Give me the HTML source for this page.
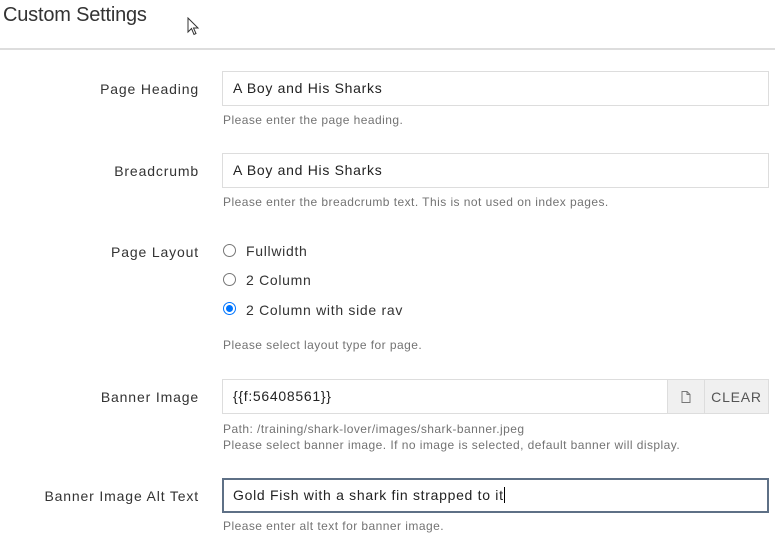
<!DOCTYPE html>
<html><head><meta charset="utf-8"><style>
*{box-sizing:border-box;margin:0;padding:0}
body{width:775px;height:535px;overflow:hidden;background:#fff;font-family:"Liberation Sans",Arial,sans-serif;color:#333;position:relative}
.abs{position:absolute}
h1{position:absolute;left:3px;top:4px;font-size:20px;font-weight:normal;color:#333;letter-spacing:-0.2px}
.hr{position:absolute;left:0;top:48px;width:775px;height:2px;background:#ddd}
.lbl{position:absolute;right:576px;font-size:14px;color:#333;text-align:right;white-space:nowrap;letter-spacing:0.85px}
.inp{position:absolute;left:222px;width:547px;height:35px;border:1px solid #ddd;font-size:14px;padding:8px 10px;color:#222;white-space:nowrap;letter-spacing:0.7px}
.help{position:absolute;left:223px;font-size:12px;color:#737373;white-space:nowrap;letter-spacing:0.45px}
.radio{position:absolute;left:223px;width:13px;height:13px;border:1px solid #777;border-radius:50%}
.radio.on{border:1px solid #0075ff;}
.radio.on::after{content:"";position:absolute;left:2px;top:2px;width:7px;height:7px;border-radius:50%;background:#0075ff}
.rl{position:absolute;left:246px;font-size:14px;color:#333;letter-spacing:0.7px}
</style></head><body>
<h1>Custom Settings</h1>
<svg class="abs" style="left:187px;top:17px" width="14" height="20" viewBox="0 0 14 20"><path d="M1 1 L1 15 L4.5 11.5 L7 17.5 L9 16.5 L6.5 11 L11 11 Z" fill="#fff" stroke="#333" stroke-width="1"/></svg>
<div class="hr"></div>

<div class="lbl" style="top:81px">Page Heading</div>
<div class="inp" style="top:71px">A Boy and His Sharks</div>
<div class="help" style="top:113px">Please enter the page heading.</div>

<div class="lbl" style="top:163px">Breadcrumb</div>
<div class="inp" style="top:153px">A Boy and His Sharks</div>
<div class="help" style="top:195px">Please enter the breadcrumb text. This is not used on index pages.</div>

<div class="lbl" style="top:244px">Page Layout</div>
<div class="radio" style="top:244px"></div><div class="rl" style="top:243px">Fullwidth</div>
<div class="radio" style="top:273px"></div><div class="rl" style="top:272px">2 Column</div>
<div class="radio on" style="top:302px"></div><div class="rl" style="top:302px">2 Column with side rav</div>
<div class="help" style="top:338px">Please select layout type for page.</div>

<div class="lbl" style="top:389px">Banner Image</div>
<div class="inp" style="top:379px;width:446px">{{f:56408561}}</div>
<div class="abs" style="left:667px;top:379px;width:38px;height:35px;background:#f0f0f0;border:1px solid #ddd"></div>
<svg class="abs" style="left:681px;top:391px" width="10" height="12" viewBox="0 0 10 12"><path d="M1 .5H6L9 3.5V11.5H1Z M6 .5V3.5H9" fill="none" stroke="#777" stroke-width="1"/></svg>
<div class="abs" style="left:704px;top:379px;width:65px;height:35px;background:#f0f0f0;border:1px solid #ddd;font-size:14px;color:#555;padding-top:9px;text-align:center;letter-spacing:.8px">CLEAR</div>
<div class="help" style="top:422px">Path: /training/shark-lover/images/shark-banner.jpeg</div>
<div class="help" style="top:438px">Please select banner image. If no image is selected, default banner will display.</div>

<div class="lbl" style="top:488px">Banner Image Alt Text</div>
<div class="inp" style="top:478px;border:2px solid #5e7086;padding:7px 9px">Gold Fish with a shark fin strapped to it<span style="display:inline-block;width:1px;height:16px;background:#000;vertical-align:-3px"></span></div>
<div class="help" style="top:519px">Please enter alt text for banner image.</div>
</body></html>
